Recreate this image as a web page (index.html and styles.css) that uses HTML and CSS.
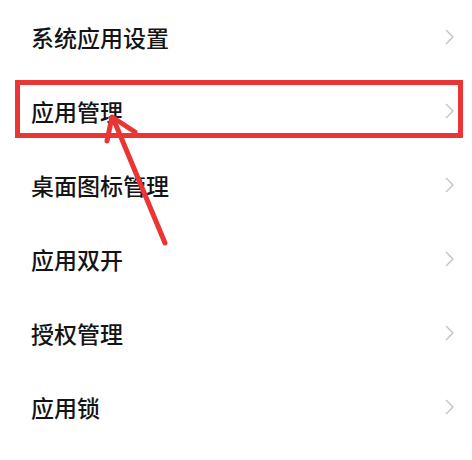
FILE: index.html
```html
<!DOCTYPE html>
<html lang="zh-CN">
<head>
  <meta charset="UTF-8" />
  <meta name="viewport" content="width=device-width, initial-scale=1.0" />
  <title>应用设置</title>
  <link rel="stylesheet" href="styles.css">
</head>
<body>
  <main class="page">
    <ul class="menu">
      <li class="menu-item"><span>系统应用设置</span><svg class="chevron" viewBox="0 0 9 16"><path d="M1 1 L8 8 L1 15" /></svg></li>
      <li class="menu-item"><span>应用管理</span><svg class="chevron" viewBox="0 0 9 16"><path d="M1 1 L8 8 L1 15" /></svg></li>
      <li class="menu-item"><span>桌面图标管理</span><svg class="chevron" viewBox="0 0 9 16"><path d="M1 1 L8 8 L1 15" /></svg></li>
      <li class="menu-item"><span>应用双开</span><svg class="chevron" viewBox="0 0 9 16"><path d="M1 1 L8 8 L1 15" /></svg></li>
      <li class="menu-item"><span>授权管理</span><svg class="chevron" viewBox="0 0 9 16"><path d="M1 1 L8 8 L1 15" /></svg></li>
      <li class="menu-item"><span>应用锁</span><svg class="chevron" viewBox="0 0 9 16"><path d="M1 1 L8 8 L1 15" /></svg></li>
    </ul>

    <!-- marca roja sobre "应用管理" -->
    <div class="highlight"></div>
    <svg class="pointer" width="472" height="460" viewBox="0 0 472 460">
      <path d="M165 243 L113 118" />
      <path d="M107 141 L112 117 L135 132" />
    </svg>
  </main>
</body>
</html>
```

FILE: styles.css
```css
:root {
  --fondo: #ffffff;
  --texto: #141414;
  --flecha: #c2c2c2;
  --rojo: #ea3535;
}

body {
  margin: 0;
  background: var(--fondo);
  font-family: "Noto Sans CJK SC", "Noto Sans", sans-serif;
}

.page {
  position: relative;
  width: 472px;
  height: 460px;
  overflow: hidden;
}

.menu {
  list-style: none;
  margin: 0;
  padding: 0;
}

.menu-item {
  display: flex;
  align-items: center;
  justify-content: space-between;
  height: 74px;
  padding: 0 18px 0 31px;
  font-size: 23px;
  font-weight: 500;
  color: var(--texto);
}

.chevron {
  width: 9px;
  height: 16px;
  fill: none;
  stroke: var(--flecha);
  stroke-width: 1.4;
}

.highlight {
  position: absolute;
  left: 15px;
  top: 80px;
  width: 438px;
  height: 48px;
  border: 5px solid var(--rojo);
}

.pointer {
  position: absolute;
  left: 0;
  top: 0;
  fill: none;
  stroke: var(--rojo);
  stroke-width: 5;
  stroke-linecap: round;
  stroke-linejoin: round;
}
```
